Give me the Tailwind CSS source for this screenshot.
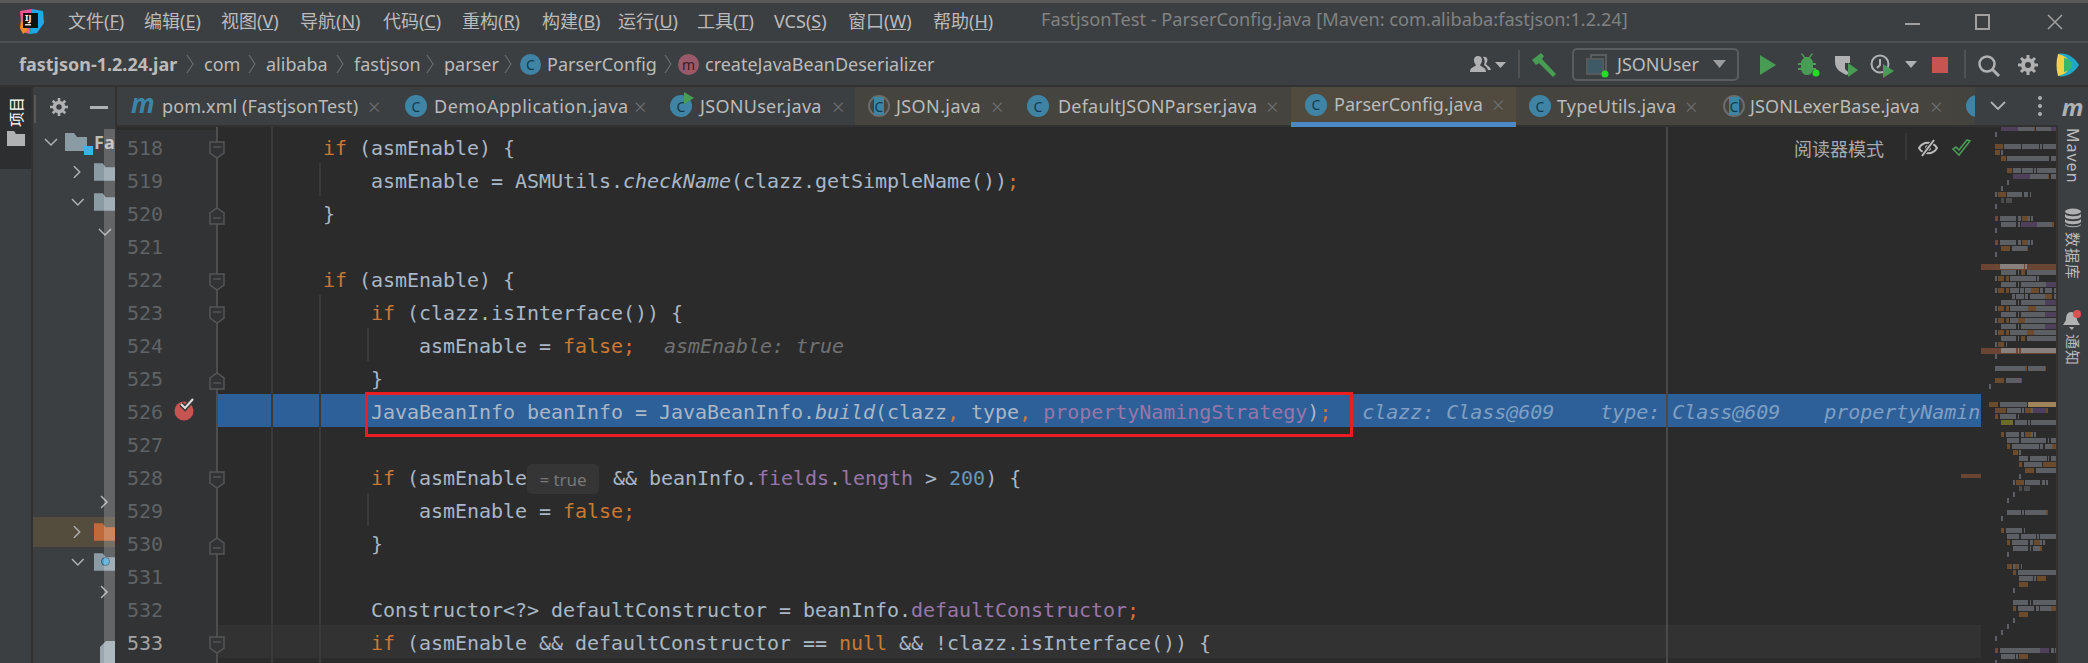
<!DOCTYPE html>
<html lang="en">
<head>
    <meta charset="UTF-8">
    <title>FastjsonTest - ParserConfig.java</title>
    <script src="https://cdn.jsdelivr.net/npm/@tailwindcss/browser@4"></script>
</head>
<body class="w-[2088px] h-[663px] overflow-hidden bg-[#3c3f41] font-['Noto_Sans','Noto_Sans_CJK_SC',sans-serif] text-[18px] text-[#bbbbbb]">

    <!-- title bar -->
    <div class="h-[3px] bg-[#585858]"></div>
    <div class="h-[40px] flex items-center relative border-b-2 border-[#4e5052]">
        <svg class="absolute left-[18px] top-[5px]" width="28" height="28" viewBox="0 0 28 28">
            <polygon points="2,3 14,1 12,26 4,24" fill="#f0568f"/>
            <polygon points="3,12 10,22 5,26 2,20" fill="#f58a1f"/>
            <polygon points="14,1 25,3 26,15 19,25 12,26" fill="#1fa8e8"/>
            <rect x="5" y="5" width="15" height="15" fill="#111"/>
            <rect x="7" y="16" width="6" height="1.5" fill="#ddd"/>
        </svg>
        <span class="absolute left-[25px] top-[10px] text-[9px] leading-[10px] font-bold text-white">IJ</span>
        <div class="flex pl-[68px] -mt-[2px]">
            <span class="w-[76px]">文件(<u>F</u>)</span>
            <span class="w-[77px]">编辑(<u>E</u>)</span>
            <span class="w-[79px]">视图(<u>V</u>)</span>
            <span class="w-[83px]">导航(<u>N</u>)</span>
            <span class="w-[79px]">代码(<u>C</u>)</span>
            <span class="w-[80px]">重构(<u>R</u>)</span>
            <span class="w-[76px]">构建(<u>B</u>)</span>
            <span class="w-[79px]">运行(<u>U</u>)</span>
            <span class="w-[77px]">工具(<u>T</u>)</span>
            <span class="w-[74px]">VCS(<u>S</u>)</span>
            <span class="w-[85px]">窗口(<u>W</u>)</span>
            <span class="w-[108px]">帮助(<u>H</u>)</span>
        </div>
        <span class="text-[#808284] text-[18.2px] -mt-[4px]">FastjsonTest - ParserConfig.java [Maven: com.alibaba:fastjson:1.2.24]</span>
        <div class="absolute left-[1905px] top-[20px] w-[15px] h-[2px] bg-[#a0a0a0]"></div>
        <div class="absolute left-[1975px] top-[11px] w-[15px] h-[16px] border-2 border-[#a0a0a0]"></div>
        <svg class="absolute left-[2047px] top-[11px]" width="16" height="16" viewBox="0 0 16 16"><path d="M1 1l14 14M15 1L1 15" stroke="#a0a0a0" stroke-width="1.5"/></svg>
    </div>

    <!-- navigation bar -->
    <div class="h-[42px] flex items-center relative">
        <div class="flex items-center pl-[19px]">
            <span class="w-[185px] flex items-center justify-between pr-[9px]"><span class="font-bold">fastjson-1.2.24.jar</span><svg width="10" height="22" viewBox="0 0 10 22"><path d="M2 2l6 9-6 9" fill="none" stroke="#6a6c6e" stroke-width="1.2"/></svg></span>
            <span class="w-[62px] flex items-center justify-between pr-[9px]"><span>com</span><svg width="10" height="22" viewBox="0 0 10 22"><path d="M2 2l6 9-6 9" fill="none" stroke="#6a6c6e" stroke-width="1.2"/></svg></span>
            <span class="w-[88px] flex items-center justify-between pr-[9px]"><span>alibaba</span><svg width="10" height="22" viewBox="0 0 10 22"><path d="M2 2l6 9-6 9" fill="none" stroke="#6a6c6e" stroke-width="1.2"/></svg></span>
            <span class="w-[90px] flex items-center justify-between pr-[9px]"><span>fastjson</span><svg width="10" height="22" viewBox="0 0 10 22"><path d="M2 2l6 9-6 9" fill="none" stroke="#6a6c6e" stroke-width="1.2"/></svg></span>
            <span class="w-[76px] flex items-center justify-between pr-[7px]"><span>parser</span><svg width="10" height="22" viewBox="0 0 10 22"><path d="M2 2l6 9-6 9" fill="none" stroke="#6a6c6e" stroke-width="1.2"/></svg></span>
            <span class="w-[21px] h-[21px] rounded-full bg-[#3f84a4] text-[#123b4e] text-[14px] flex items-center justify-center">C</span>
            <span class="ml-[6px] w-[131px] flex items-center justify-between pr-[5px]"><span>ParserConfig</span><svg width="10" height="22" viewBox="0 0 10 22"><path d="M2 2l6 9-6 9" fill="none" stroke="#6a6c6e" stroke-width="1.2"/></svg></span>
            <span class="w-[21px] h-[21px] rounded-full bg-[#99596a] text-[#3a1a22] text-[14px] flex items-center justify-center">m</span>
            <span class="ml-[6px]">createJavaBeanDeserializer</span>
        </div>

        <svg class="absolute left-[1468px] top-[10px]" width="40" height="22" viewBox="0 0 40 22"><path d="M2 19c0-5 5-5 6-7-3-3-3-9 2-9s5 6 2 9c1 2 6 2 6 7zM15 4c4-1 6 3 3 7 1 2 4 2 5 6h-3c-1-3-3-4-4-5 1-3 1-6-1-8z" fill="#afb1b3"/><path d="M27 9h11l-5.500 6z" fill="#afb1b3"/></svg>
        <div class="absolute left-[1518px] top-[7px] w-[2px] h-[28px] bg-[#505254]"></div>
        <svg class="absolute left-[1531px] top-[9px]" width="26" height="26" viewBox="0 0 26 26"><path d="M1 8l9-7 3 3-2 3 14 15-3 3L8 11 5 13z" fill="#499c54"/></svg>
        <div class="absolute left-[1572px] top-[5px] w-[167px] h-[33px] border-2 border-[#5a5d5f] rounded-[5px] flex items-center pl-[43px] text-[#bbbbbb]">JSONUser</div>
        <svg class="absolute left-[1586px] top-[11px]" width="24" height="24" viewBox="0 0 24 24"><rect x="5" y="1" width="15" height="16" fill="none" stroke="#5b5e60" stroke-width="2"/><rect x="1" y="5" width="16" height="15" fill="#3d5a66" stroke="#565a5c" stroke-width="2"/><circle cx="19" cy="20" r="3.500" fill="#22dd22"/></svg>
        <svg class="absolute left-[1713px] top-[17px]" width="13" height="8" viewBox="0 0 13 8"><path d="M0 0h13l-6.500 8z" fill="#9a9c9e"/></svg>
        <svg class="absolute left-[1760px] top-[12px]" width="16" height="20" viewBox="0 0 16 20"><path d="M0 0l16 10L0 20z" fill="#499c54"/></svg>
        <svg class="absolute left-[1796px] top-[9px]" width="24" height="26" viewBox="0 0 24 26"><path d="M6 1l3 4h4l3-4 1 1-3 4c2 1 3 3 3 5h3v2h-3v3h3v2h-3c-1 3-3 5-6 5s-5-2-6-5H2v-2h3v-3H2v-2h3c0-2 1-4 3-5L5 2z" fill="#499c54"/><circle cx="20" cy="21" r="3.500" fill="#22dd22"/></svg>
        <svg class="absolute left-[1834px] top-[11px]" width="24" height="24" viewBox="0 0 24 24"><path d="M1 2h15v7h-5v6l4 4-2 2c-6-2-12-6-12-13z" fill="#afb1b3"/><path d="M14 9l10 7-10 7z" fill="#499c54"/></svg>
        <svg class="absolute left-[1870px] top-[10px]" width="26" height="26" viewBox="0 0 26 26"><circle cx="10" cy="11" r="8.500" fill="none" stroke="#afb1b3" stroke-width="2"/><path d="M10 6v6l-3 3" fill="none" stroke="#afb1b3" stroke-width="2"/><path d="M13 11l11 7-11 7z" fill="#499c54"/></svg>
        <svg class="absolute left-[1905px] top-[18px]" width="12" height="7" viewBox="0 0 12 7"><path d="M0 0h12l-6 7z" fill="#afb1b3"/></svg>
        <div class="absolute left-[1932px] top-[14px] w-[16px] h-[16px] bg-[#c75450]"></div>
        <div class="absolute left-[1964px] top-[7px] w-[2px] h-[28px] bg-[#505254]"></div>
        <svg class="absolute left-[1977px] top-[11px]" width="24" height="24" viewBox="0 0 24 24"><circle cx="10" cy="10" r="7.500" fill="none" stroke="#afb1b3" stroke-width="2.500"/><path d="M15 15l7 7" stroke="#afb1b3" stroke-width="3"/></svg>
        <svg class="absolute left-[2018px] top-[12px]" width="20" height="20" viewBox="0 0 20 20"><circle cx="10" cy="10" r="5" fill="none" stroke="#afb1b3" stroke-width="4"/><path d="M10 0v5M10 15v5M0 10h5M15 10h5M3 3l3 3M14 14l3 3M17 3l-3 3M6 14l-3 3" stroke="#afb1b3" stroke-width="3"/></svg>
        <svg class="absolute left-[2056px] top-[9px]" width="24" height="26" viewBox="0 0 24 26"><path d="M2 2c8-2 16 3 21 11-5 8-13 13-21 11z" fill="#1fa8c8"/><path d="M2 2c8 2 12 6 12 11S10 22 2 24c-2-7-2-15 0-22z" fill="#f2d24b"/><path d="M8 6c5 1 8 4 8 7s-3 6-8 7z" fill="#39b86a"/></svg>
    </div>

    <div class="flex h-[578px]">
        <!-- left tool strip -->
        <div class="w-[33px] border-r-2 border-[#323232]">
            <div class="h-[84px] bg-[#2d2e2f] flex flex-col items-center pt-[10px] border-t-2 border-[#323232]">
                <span class="[writing-mode:vertical-rl] [text-orientation:sideways] rotate-180 text-[15px] leading-[16px] text-white">项目</span>
                <svg class="mt-[4px]" width="18" height="15" viewBox="0 0 18 15"><path d="M0 0h7l2 3h9v12H0z" fill="#afb1b3"/></svg>
            </div>
        </div>

        <!-- project panel -->
        <div class="w-[84px] relative overflow-hidden border-r-2 border-[#323232]">
            <div class="h-[42px] flex items-center border-t-2 border-[#323232] pl-[17px] gap-[22px]">
                <svg width="18" height="18" viewBox="0 0 20 20"><circle cx="10" cy="10" r="5" fill="none" stroke="#afb1b3" stroke-width="4"/><path d="M10 0v5M10 15v5M0 10h5M15 10h5M3 3l3 3M14 14l3 3M17 3l-3 3M6 14l-3 3" stroke="#afb1b3" stroke-width="3"/></svg>
                <div class="w-[18px] h-[3px] bg-[#afb1b3]"></div>
            </div>
            <div class="h-[30px] flex items-center pl-[11px] relative">
                <svg width="14" height="9" viewBox="0 0 14 9"><path d="M1 1l6 6 6-6" fill="none" stroke="#afb1b3" stroke-width="1.500"/></svg>
                <svg class="ml-[7px]" width="22" height="18" viewBox="0 0 22 18"><path d="M0 0h9l3 4h10v14H0z" fill="#8b9ba4"/></svg>
                <span class="ml-[7px] font-bold">Fa</span>
                <div class="absolute left-[51px] top-[19px] w-[9px] h-[9px] bg-[#3eb2e2]"></div>
            </div>
            <div class="h-[30px] flex items-center pl-[40px]">
                <svg width="9" height="14" viewBox="0 0 9 14"><path d="M1 1l6 6-6 6" fill="none" stroke="#afb1b3" stroke-width="1.500"/></svg>
                <svg class="ml-[12px]" width="22" height="18" viewBox="0 0 22 18"><path d="M0 0h9l3 4h10v14H0z" fill="#8b9ba4"/></svg>
            </div>
            <div class="h-[30px] flex items-center pl-[38px]">
                <svg width="14" height="9" viewBox="0 0 14 9"><path d="M1 1l6 6 6-6" fill="none" stroke="#afb1b3" stroke-width="1.500"/></svg>
                <svg class="ml-[9px]" width="22" height="18" viewBox="0 0 22 18"><path d="M0 0h9l3 4h10v14H0z" fill="#8b9ba4"/></svg>
            </div>
            <div class="h-[30px] flex items-center pl-[65px]">
                <svg width="14" height="9" viewBox="0 0 14 9"><path d="M1 1l6 6 6-6" fill="none" stroke="#afb1b3" stroke-width="1.500"/></svg>
            </div>
            <div class="h-[240px]"></div>
            <div class="h-[30px] flex items-center pl-[67px]">
                <svg width="9" height="14" viewBox="0 0 9 14"><path d="M1 1l6 6-6 6" fill="none" stroke="#afb1b3" stroke-width="1.500"/></svg>
            </div>
            <div class="h-[30px] flex items-center pl-[40px] bg-[#544c3c]">
                <svg width="9" height="14" viewBox="0 0 9 14"><path d="M1 1l6 6-6 6" fill="none" stroke="#afb1b3" stroke-width="1.500"/></svg>
                <svg class="ml-[12px]" width="22" height="18" viewBox="0 0 22 18"><path d="M0 0h9l3 4h10v14H0z" fill="#c0693a"/></svg>
            </div>
            <div class="h-[30px] flex items-center pl-[38px] relative">
                <svg width="14" height="9" viewBox="0 0 14 9"><path d="M1 1l6 6 6-6" fill="none" stroke="#afb1b3" stroke-width="1.500"/></svg>
                <svg class="ml-[9px]" width="22" height="18" viewBox="0 0 22 18"><path d="M0 0h9l3 4h10v14H0z" fill="#8b9ba4"/></svg>
                <div class="absolute left-[68px] top-[10px] w-[9px] h-[9px] rounded-full bg-[#4aa8d8] border border-[#33566a]"></div>
            </div>
            <div class="h-[30px] flex items-center pl-[67px]">
                <svg width="9" height="14" viewBox="0 0 9 14"><path d="M1 1l6 6-6 6" fill="none" stroke="#afb1b3" stroke-width="1.500"/></svg>
            </div>
            <div class="h-[30px]"></div>
            <div class="h-[30px] pl-[67px] pt-[4px]">
                <svg width="16" height="22" viewBox="0 0 16 22"><path d="M6 0h10v22H0V6z" fill="#9aa7b0"/></svg>
            </div>
            <!-- translucent scroll thumb -->
            <div class="absolute left-[71px] top-[44px] bottom-0 w-[12px] bg-white/20"></div>
            <div class="absolute left-[1px] top-[10px] w-[2px] h-[28px] bg-[#555759]"></div>
        </div>

        <div class="w-[1941px] flex flex-col">
            <!-- tabs -->
            <div class="h-[42px] flex items-stretch border-t-2 border-b-2 border-[#323232] shrink-0 whitespace-nowrap">
                <div class="w-[274px] flex items-center pl-[14px]">
                    <span class="w-[23px] text-[26px] leading-[26px] font-bold italic text-[#3a86ab] -mt-[7px]">m</span>
                    <span class="ml-[8px] w-[196px] tracking-[0.1px]">pom.xml (FastjsonTest)</span>
                    <span class="ml-[10px] text-[#6e7072] text-[22px] font-light">×</span>
                </div>
                <div class="w-[264px] flex items-center pl-[14px]">
                    <span class="w-[22px] h-[22px] rounded-full bg-[#3f84a4] text-[#123b4e] text-[14px] flex items-center justify-center">C</span>
                    <span class="ml-[7px] w-[190px] tracking-[0.5px]">DemoApplication.java</span>
                    <span class="ml-[10px] text-[#6e7072] text-[22px] font-light">×</span>
                </div>
                <div class="w-[200px] flex items-center pl-[15px]">
                    <span class="w-[22px] h-[22px] rounded-full bg-[#3f84a4] text-[#123b4e] text-[14px] flex items-center justify-center relative">C<svg class="absolute -right-[2px] -top-[3px]" width="10" height="12" viewBox="0 0 10 12"><path d="M0 0l10 6-10 6z" fill="#499c54"/></svg></span>
                    <span class="ml-[8px] w-[122px] tracking-[0.3px]">JSONUser.java</span>
                    <span class="ml-[10px] text-[#6e7072] text-[22px] font-light">×</span>
                </div>
                <div class="w-[158px] flex items-center pl-[13px] bg-[#45443e]">
                    <span class="w-[22px] h-[22px] rounded-full border-2 border-[#6a6c6e] text-[#123b4e] text-[14px] flex items-center justify-center"><span class="w-[10px] h-[18px] bg-[#3f84a4] flex items-center justify-center">C</span></span>
                    <span class="ml-[6px] w-[85px] tracking-[0.4px]">JSON.java</span>
                    <span class="ml-[10px] text-[#6e7072] text-[22px] font-light">×</span>
                </div>
                <div class="w-[278px] flex items-center pl-[14px] bg-[#45443e]">
                    <span class="w-[22px] h-[22px] rounded-full bg-[#3f84a4] text-[#123b4e] text-[14px] flex items-center justify-center">C</span>
                    <span class="ml-[9px] w-[198px] tracking-[0.2px]">DefaultJSONParser.java</span>
                    <span class="ml-[10px] text-[#6e7072] text-[22px] font-light">×</span>
                </div>
                <div class="w-[225px] flex items-center pl-[14px] bg-[#504b3e] border-b-[5px] border-[#4a88c7] mb-[-2px]">
                    <span class="w-[22px] h-[22px] rounded-full bg-[#3f84a4] text-[#123b4e] text-[14px] flex items-center justify-center">C</span>
                    <span class="ml-[7px] w-[148px]">ParserConfig.java</span>
                    <span class="ml-[10px] text-[#6e7072] text-[22px] font-light">×</span>
                </div>
                <div class="w-[192px] flex items-center pl-[13px] bg-[#45443e]">
                    <span class="w-[22px] h-[22px] rounded-full bg-[#3f84a4] text-[#123b4e] text-[14px] flex items-center justify-center">C</span>
                    <span class="ml-[6px] w-[118px] tracking-[0.2px]">TypeUtils.java</span>
                    <span class="ml-[10px] text-[#6e7072] text-[22px] font-light">×</span>
                </div>
                <div class="w-[243px] flex items-center pl-[15px] bg-[#45443e]">
                    <span class="w-[22px] h-[22px] rounded-full border-2 border-[#6a6c6e] text-[#123b4e] text-[14px] flex items-center justify-center"><span class="w-[10px] h-[18px] bg-[#3f84a4] flex items-center justify-center">C</span></span>
                    <span class="ml-[5px] w-[170px] tracking-[0.1px]">JSONLexerBase.java</span>
                    <span class="ml-[10px] text-[#6e7072] text-[22px] font-light">×</span>
                </div>
                <div class="flex-1 flex items-center pl-[15px] bg-gradient-to-r from-[#45443e] to-[#3c3f41] relative overflow-hidden">
                    <span class="w-[22px] h-[22px] rounded-full bg-[#3f84a4] shrink-0"></span>
                    <div class="absolute left-[24px] top-0 bottom-0 w-[82px] bg-[#3c3f41]"></div>
                    <svg class="absolute left-[39px] top-[14px]" width="16" height="10" viewBox="0 0 16 10"><path d="M1 1l7 7 7-7" fill="none" stroke="#afb1b3" stroke-width="1.800"/></svg>
                    <div class="absolute left-[87px] top-[9px] flex flex-col gap-[4px]">
                        <div class="w-[4px] h-[4px] rounded-full bg-[#afb1b3]"></div>
                        <div class="w-[4px] h-[4px] rounded-full bg-[#afb1b3]"></div>
                        <div class="w-[4px] h-[4px] rounded-full bg-[#afb1b3]"></div>
                    </div>
                </div>
            </div>

            <!-- editor -->
            <div class="flex-1 flex overflow-hidden bg-[#2b2b2b]">
                <div class="w-[1864px] relative overflow-hidden pt-[3px] font-['DejaVu_Sans_Mono',monospace] text-[20px] tracking-[-0.04px] leading-[37px] text-[#a9b7c6] [&>div]:whitespace-pre">
                    <div class="flex h-[33px]"><span class="w-[100px] shrink-0 bg-[#313335] pl-[10px] text-[#606366]">518</span><span class="pl-[106px]"><span class="text-[#cc7832]">if</span> (asmEnable) {</span></div>
                    <div class="flex h-[33px]"><span class="w-[100px] shrink-0 bg-[#313335] pl-[10px] text-[#606366]">519</span><span class="pl-[154px]">asmEnable = ASMUtils.<i>checkName</i>(clazz.getSimpleName())<span class="text-[#cc7832]">;</span></span></div>
                    <div class="flex h-[33px]"><span class="w-[100px] shrink-0 bg-[#313335] pl-[10px] text-[#606366]">520</span><span class="pl-[106px]">}</span></div>
                    <div class="flex h-[33px]"><span class="w-[100px] shrink-0 bg-[#313335] pl-[10px] text-[#606366]">521</span></div>
                    <div class="flex h-[33px]"><span class="w-[100px] shrink-0 bg-[#313335] pl-[10px] text-[#606366]">522</span><span class="pl-[106px]"><span class="text-[#cc7832]">if</span> (asmEnable) {</span></div>
                    <div class="flex h-[33px]"><span class="w-[100px] shrink-0 bg-[#313335] pl-[10px] text-[#606366]">523</span><span class="pl-[154px]"><span class="text-[#cc7832]">if</span> (clazz.isInterface()) {</span></div>
                    <div class="flex h-[33px]"><span class="w-[100px] shrink-0 bg-[#313335] pl-[10px] text-[#606366]">524</span><span class="pl-[202px]">asmEnable = <span class="text-[#cc7832]">false;</span><i class="ml-[29px] text-[#707070]">asmEnable: true</i></span></div>
                    <div class="flex h-[33px]"><span class="w-[100px] shrink-0 bg-[#313335] pl-[10px] text-[#606366]">525</span><span class="pl-[154px]">}</span></div>
                    <div class="flex h-[33px]"><span class="w-[100px] shrink-0 bg-[#313335] pl-[10px] text-[#606366]">526</span><span class="flex-1 h-[33px] bg-[#2d5f99] pl-[154px] overflow-hidden">JavaBeanInfo beanInfo = JavaBeanInfo.<i>build</i>(clazz<span class="text-[#cc7832]">,</span> type<span class="text-[#cc7832]">,</span> <span class="text-[#9876aa]">propertyNamingStrategy</span>)<span class="text-[#cc7832]">;</span><i class="ml-[31px] text-[#7f9fc4]">clazz: Class@609</i><i class="ml-[46px] text-[#7f9fc4]">type: Class@609</i><i class="ml-[44px] text-[#7f9fc4]">propertyNamingStrategy</i></span></div>
                    <div class="flex h-[33px]"><span class="w-[100px] shrink-0 bg-[#313335] pl-[10px] text-[#606366]">527</span></div>
                    <div class="flex h-[33px]"><span class="w-[100px] shrink-0 bg-[#313335] pl-[10px] text-[#606366]">528</span><span class="pl-[154px]"><span class="text-[#cc7832]">if</span> (asmEnable<span class="inline-flex items-center justify-center w-[72px] h-[30px] bg-[#353535] rounded-[5px] mr-[14px] font-['Noto_Sans',sans-serif] text-[17px] text-[#787878] align-middle -mt-[1px]">= true</span>&amp;&amp; beanInfo.<span class="text-[#9876aa]">fields</span>.<span class="text-[#9876aa]">length</span> &gt; <span class="text-[#6897bb]">200</span>) {</span></div>
                    <div class="flex h-[33px]"><span class="w-[100px] shrink-0 bg-[#313335] pl-[10px] text-[#606366]">529</span><span class="pl-[202px]">asmEnable = <span class="text-[#cc7832]">false;</span></span></div>
                    <div class="flex h-[33px]"><span class="w-[100px] shrink-0 bg-[#313335] pl-[10px] text-[#606366]">530</span><span class="pl-[154px]">}</span></div>
                    <div class="flex h-[33px]"><span class="w-[100px] shrink-0 bg-[#313335] pl-[10px] text-[#606366]">531</span></div>
                    <div class="flex h-[33px]"><span class="w-[100px] shrink-0 bg-[#313335] pl-[10px] text-[#606366]">532</span><span class="pl-[154px]">Constructor&lt;?&gt; defaultConstructor = beanInfo.<span class="text-[#9876aa]">defaultConstructor</span><span class="text-[#cc7832]">;</span></span></div>
                    <div class="flex h-[33px]"><span class="w-[100px] shrink-0 bg-[#313335] pl-[10px] text-[#a4a3a3]">533</span><span class="flex-1 h-[33px] bg-[#323232] pl-[154px]"><span class="text-[#cc7832]">if</span> (asmEnable &amp;&amp; defaultConstructor == <span class="text-[#cc7832]">null</span> &amp;&amp; !clazz.isInterface()) {</span></div>
                    <div class="flex h-[33px]"><span class="w-[100px] shrink-0 bg-[#313335]"></span></div>

                    <!-- guides, fold markers and overlays -->
                    <div class="absolute left-[99px] top-0 bottom-0 w-[2px] bg-[#4d4d4d]"></div>
                    <div class="absolute left-[154px] top-0 bottom-0 w-[2px] bg-[#3a3a3a]"></div>
                    <div class="absolute left-[202px] top-[36px] w-[2px] h-[33px] bg-[#3a3a3a]"></div>
                    <div class="absolute left-[202px] top-[168px] bottom-0 w-[2px] bg-[#3a3a3a]"></div>
                    <div class="absolute left-[250px] top-[201px] w-[2px] h-[33px] bg-[#3a3a3a]"></div>
                    <div class="absolute left-[250px] top-[366px] w-[2px] h-[33px] bg-[#3a3a3a]"></div>
                    <div class="absolute left-[1549px] top-0 bottom-0 w-[2px] bg-[#4a4a4a]"></div>
                    <div class="absolute left-[1844px] top-[347px] w-[20px] h-[4px] bg-[#6a4534]"></div>

                    <svg class="absolute left-[92px] top-[14px]" width="16" height="18" viewBox="0 0 16 18"><path d="M1 1h14v11l-7 5-7-5z" fill="#313335" stroke="#555" stroke-width="1.500"/><path d="M4 6h8" stroke="#555" stroke-width="1.500"/></svg>
                    <svg class="absolute left-[92px] top-[80px]" width="16" height="18" viewBox="0 0 16 18"><path d="M1 17h14V6L8 1 1 6z" fill="#313335" stroke="#555" stroke-width="1.500"/><path d="M4 11h8" stroke="#555" stroke-width="1.500"/></svg>
                    <svg class="absolute left-[92px] top-[146px]" width="16" height="18" viewBox="0 0 16 18"><path d="M1 1h14v11l-7 5-7-5z" fill="#313335" stroke="#555" stroke-width="1.500"/><path d="M4 6h8" stroke="#555" stroke-width="1.500"/></svg>
                    <svg class="absolute left-[92px] top-[179px]" width="16" height="18" viewBox="0 0 16 18"><path d="M1 1h14v11l-7 5-7-5z" fill="#313335" stroke="#555" stroke-width="1.500"/><path d="M4 6h8" stroke="#555" stroke-width="1.500"/></svg>
                    <svg class="absolute left-[92px] top-[245px]" width="16" height="18" viewBox="0 0 16 18"><path d="M1 17h14V6L8 1 1 6z" fill="#313335" stroke="#555" stroke-width="1.500"/><path d="M4 11h8" stroke="#555" stroke-width="1.500"/></svg>
                    <svg class="absolute left-[92px] top-[344px]" width="16" height="18" viewBox="0 0 16 18"><path d="M1 1h14v11l-7 5-7-5z" fill="#313335" stroke="#555" stroke-width="1.500"/><path d="M4 6h8" stroke="#555" stroke-width="1.500"/></svg>
                    <svg class="absolute left-[92px] top-[410px]" width="16" height="18" viewBox="0 0 16 18"><path d="M1 17h14V6L8 1 1 6z" fill="#313335" stroke="#555" stroke-width="1.500"/><path d="M4 11h8" stroke="#555" stroke-width="1.500"/></svg>
                    <svg class="absolute left-[92px] top-[509px]" width="16" height="18" viewBox="0 0 16 18"><path d="M1 1h14v11l-7 5-7-5z" fill="#323436" stroke="#555" stroke-width="1.500"/><path d="M4 6h8" stroke="#555" stroke-width="1.500"/></svg>

                    <svg class="absolute left-[57px] top-[270px]" width="22" height="24" viewBox="0 0 22 24"><circle cx="10" cy="14" r="9.500" fill="#c75450"/><path d="M7 7l4 4 8-9" fill="none" stroke="#3a3a3a" stroke-width="5"/><path d="M7 7l4 4 8-9" fill="none" stroke="#dddddd" stroke-width="2"/></svg>

                    <div class="absolute left-[248px] top-[265px] w-[988px] h-[45px] border-[3px] border-[#ec1c24]"></div>

                    <!-- reader mode bar -->
                    <span class="absolute left-[1677px] top-[3px] font-['Noto_Sans_CJK_SC',sans-serif] text-[18px] tracking-normal text-[#a9a9a9]">阅读器模式</span>
                    <div class="absolute left-[1788px] top-[6px] w-[2px] h-[27px] bg-[#373737]"></div>
                    <svg class="absolute left-[1801px] top-[12px]" width="20" height="18" viewBox="0 0 20 18"><path d="M1 9c4-7 14-7 18 0-4 7-14 7-18 0z" fill="none" stroke="#bdbdbd" stroke-width="2"/><circle cx="10" cy="9" r="3" fill="#bdbdbd"/><path d="M4 17L16 1" stroke="#2b2b2b" stroke-width="4"/><path d="M4 17L16 1" stroke="#bdbdbd" stroke-width="2"/></svg>
                    <svg class="absolute left-[1835px] top-[12px]" width="20" height="18" viewBox="0 0 20 18"><path d="M1 10l6 6L18 2l-3-1-8 10-3-3z" fill="none" stroke="#499c54" stroke-width="1.600"/></svg>
                </div>

                <!-- minimap -->
                <div id="minimap" class="w-[75px] -mt-[1px] overflow-hidden"></div>
                <div class="w-[2px] bg-[#323232]"></div>
            </div>
        </div>

        <!-- right tool strip -->
        <div class="w-[30px] border-t-2 border-[#323232] flex flex-col items-center text-[15px] leading-[18px] tracking-[1px]">
            <span class="text-[24px] leading-[24px] font-bold italic text-[#afb1b3] mt-[8px]">m</span>
            <span class="[writing-mode:vertical-rl] mt-[9px] text-[16px]">Maven</span>
            <svg class="mt-[24px]" width="18" height="20" viewBox="0 0 18 20"><ellipse cx="9" cy="3.500" rx="8" ry="3" fill="#afb1b3"/><path d="M1 6c2 3 14 3 16 0v3c-2 3-14 3-16 0zM1 11c2 3 14 3 16 0v3c-2 3-14 3-16 0zM1 16c2 3 14 3 16 0v1c-2 3-14 3-16 0z" fill="#afb1b3"/></svg>
            <span class="[writing-mode:vertical-rl] [text-orientation:sideways] mt-[4px]">数据库</span>
            <svg class="mt-[29px]" width="22" height="22" viewBox="0 0 22 22"><path d="M9 3c-4 0-5 4-5 8l-3 5h17l-3-5c0-4-1-8-6-8zM7 18h5l-2 3z" fill="#afb1b3"/><circle cx="15" cy="5" r="4" fill="#d9534f"/></svg>
            <span class="[writing-mode:vertical-rl] [text-orientation:sideways] mt-[3px]">通知</span>
        </div>
    </div>

    <script>
        // rows of the minimap, segments in "from-to colour" form
        const rows = {
            0:'303-354p 354-402g 402-405o 408-453g 453-468p', 1:'285-291g', 3:'285-309o 312-363g 366-417g 420-426g 429-468g',
            4:'285-300o 303-309g', 5:'303-318o 321-447g 453-468g', 7:'321-336o 339-363g 366-399g 402-408g 411-468g',
            8:'339-390p 390-444g 444-447o 453-468g', 9:'321-327g', 10:'303-309g', 11:'285-291g 294-318o 321-366g 372-384g 390-393g',
            12:'303-312d 318-336d', 13:'285-291g', 15:'285-294o 300-348g 354-363g 366-384o 384-390g 393-399g',
            16:'303-348g 354-360g 363-411p 411-456g 456-462o', 17:'285-291g', 19:'285-294o 300-348g 354-363g 366-384o 384-390g 393-399g',
            20:'303-330o 336-381g 381-384o', 21:'285-291g', 23:'285-294o 300-372l 375-381l',
            24:'303-348g 354-357g 363-375o 381-468g', 25:'285-291g 294-312o 318-327o 330-408g 411-417g', 26:'303-348g 354-357g 363-438g 438-468p',
            27:'285-291g 294-312o 318-327o 330-357g 360-372g 375-393g 393-417o 420-429g 435-456g 462-468g',
            28:'336-345g 348-372g 375-384g 390-435g 435-456o 462-468g', 29:'303-348g 354-357g 363-435g 435-468p',
            30:'285-291g 294-312o 318-327o 330-384g 384-408o 408-468g', 31:'303-348g 354-357g 363-435g 435-468p',
            32:'285-291g 294-312o 318-327o 330-354g 354-375o 375-468g', 33:'303-348g 354-357g 363-435g 435-468p',
            34:'285-291g 294-312o 318-327o 330-381g 381-402o 402-468g', 35:'303-348g 354-357g 363-375o 381-468g',
            36:'285-291g 294-312o 318-321g', 37:'303-348l 354-357l 363-468l', 38:'285-291g', 40:'285-375g 375-381o 384-435g 435-438o',
            42:'285-312o 318-363g 363-366o', 43:'267-273g',
            46:'267-294o 300-381g 384-468t', 47:'285-318o 321-363g 366-372g 375-393o 393-399g 399-438p 438-444o', 48:'285-294o 300-348g 354-357g',
            49:'303-339v 345-381g 384-390g 393-468g', 51:'303-312o 318-357g 363-372g 375-393o 393-399g 402-408g',
            52:'321-357g 363-438g 444-447g 453-468g', 53:'321-330o 336-417g 420-429g 435-456g 456-468o', 54:'339-354o 357-363g',
            55:'357-384g 390-441g 444-447g 453-468g', 56:'357-366o 372-426g 429-468o', 57:'375-402o 408-468g', 58:'357-363g',
            59:'339-345g 348-372o 375-420g 426-435g 438-444g', 60:'357-366d 372-390d', 61:'339-345g', 62:'321-327g',
            64:'321-363g 366-372g 375-438g 438-444o', 65:'303-309g', 67:'303-312o 318-366g 372-375g',
            68:'321-357g 363-408g 411-417g 420-468g', 69:'321-330o 336-384g 390-399g 402-420o 420-426g 429-435g',
            70:'339-384g 390-393g 399-420g 420-426o', 71:'321-327g', 73:'321-336o 339-345g 345-354o 354-357g 363-366g',
            74:'339-348o 354-468g', 75:'357-399g 402-408g 411-438o', 76:'357-384o', 77:'339-345g', 79:'339-384g 390-393g 399-468g',
            80:'339-348o 354-402g 408-417g 420-453g 453-468o', 81:'357-384o', 82:'339-345g', 83:'321-327g', 84:'303-309g', 85:'285-291g',
            87:'285-294o 300-420g 420-447p 453-462g 465-468g', 88:'303-345g 348-354g 357-384o', 89:'285-291g'
        };
        const colours = { g:'bg-[#5c6065]', d:'bg-[#4a4c4e]', o:'bg-[#6c4a2c]', p:'bg-[#4e3f5a]', t:'bg-[#a08358]', v:'bg-[#6b6b2a]', l:'bg-[#88807c]' };
        const minimap = document.getElementById('minimap');
        for (let i = 0; i < 90; i++) {
            const row = document.createElement('div');
            row.className = (i === 23 || i === 37) ? 'h-[6px] flex bg-[#6a4534]' : 'h-[6px] flex';
            let pos = 243;
            (rows[i] || '').split(' ').filter(Boolean).forEach(s => {
                const [, from, to, c] = s.match(/(\d+)-(\d+)(\w)/);
                const seg = document.createElement('div');
                seg.className = 'h-[5px] shrink-0 ' + colours[c];
                seg.style.marginLeft = (from - pos) / 3 + 'px';
                seg.style.width = (to - from) / 3 + 'px';
                pos = +to;
                row.appendChild(seg);
            });
            minimap.appendChild(row);
        }
    </script>
</body>
</html>
